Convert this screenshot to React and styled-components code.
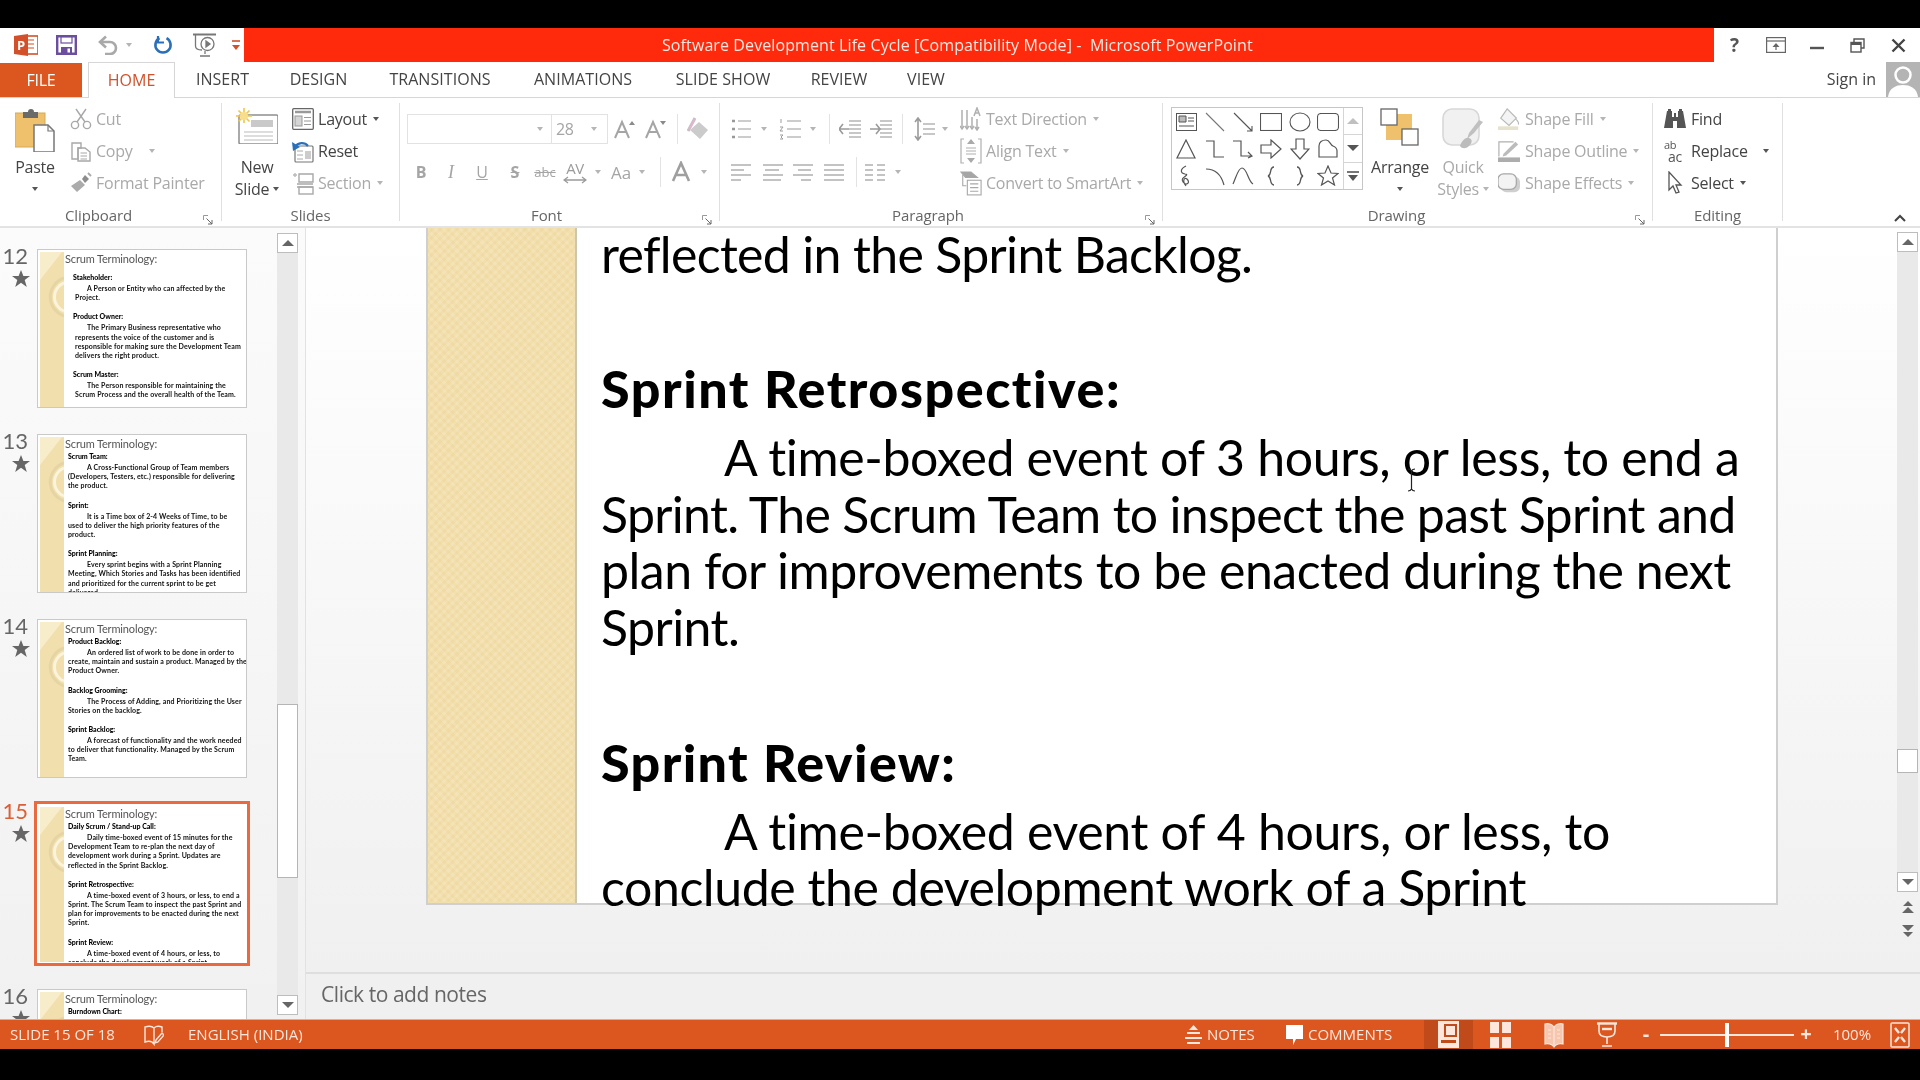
import React from 'react'
import styled, { createGlobalStyle } from 'styled-components'

const Global = createGlobalStyle`
  html, body { margin: 0; padding: 0; background: #000; }
  * { box-sizing: border-box; }
`

const UI = `"Open Sans", "Noto Sans", sans-serif`
const SLIDE = `Lato, "Open Sans", sans-serif`

const Page = styled.div`
  width: 1920px;
  height: 1080px;
  display: flex;
  flex-direction: column;
  overflow: hidden;
  background: #000;
  font-family: ${UI};
  filter: blur(0.45px);
`
const BlackBar = styled.div`
  flex: ${(p) => (p.$fill ? 1 : 'none')};
  height: ${(p) => (p.$fill ? 'auto' : `${p.$h}px`)};
  background: #000;
`

/* title bar */
const TitleRow = styled.div`
  display: flex;
  height: 34px;
  background: #fff;
`
const Qat = styled.div`
  width: 244px;
  display: flex;
  align-items: center;
  padding-left: 14px;
`
const QatSlot = styled.div`
  width: ${(p) => p.$w}px;
  display: flex;
  align-items: center;
`
const TitleBar = styled.div`
  width: 1470px;
  background: #ff2a0b;
  color: #ffe9e2;
  font-size: 16px;
  line-height: 35px;
  padding-left: 418px;
  white-space: pre;
  letter-spacing: 0.1px;
`
const WinControls = styled.div`
  flex: 1;
  display: flex;
  align-items: center;
`
const WinSlot = styled.div`
  width: 41px;
  display: flex;
  justify-content: center;
  align-items: center;
  font-size: 19px;
  font-weight: 700;
  color: #555;
`

/* tabs */
const TabRow = styled.div`
  display: flex;
  height: 36px;
  background: #fff;
  border-bottom: 1px solid #d6d6d6;
`
const FileTab = styled.div`
  width: 82px;
  margin-right: 6px;
  margin-top: 1px;
  background: #dc5620;
  color: #fff;
  font-size: 16px;
  text-align: center;
  line-height: 34px;
  letter-spacing: -0.3px;
`
const Tab = styled.div`
  width: ${(p) => p.$w}px;
  height: ${(p) => (p.$active ? 36 : 35)}px;
  text-align: center;
  font-size: 16px;
  line-height: 35px;
  letter-spacing: 0.05px;
  color: ${(p) => (p.$active ? '#d2502a' : '#444')};
  background: #fff;
  border: ${(p) => (p.$active ? '1px solid #d6d6d6' : 'none')};
  border-bottom: none;
`
const SignIn = styled.div`
  margin-left: auto;
  display: flex;
  align-items: center;
  font-size: 16px;
  line-height: 33px;
  color: #444;
  gap: 10px;
`
const Avatar = styled.div`
  width: 34px;
  height: 35px;
  background: #b4b4b4;
  overflow: hidden;
`

/* ribbon */
const Ribbon = styled.div`
  display: flex;
  height: 130px;
  background: #fff;
  border-bottom: 2px solid #e3e3e3;
  padding-top: 5px;
`
const Group = styled.div`
  position: relative;
  width: ${(p) => p.$w}px;
  height: 118px;
  flex: none;
  border-right: 1px solid #e0e0e0;
`
const GroupBody = styled.div`
  height: 102px;
  display: flex;
  padding-left: ${(p) => p.$pad || 0}px;
`
const GroupLabel = styled.div`
  height: 20px;
  line-height: 20px;
  text-align: center;
  font-size: 15px;
  letter-spacing: -0.1px;
  color: #666;
  padding-right: ${(p) => p.$shift || 0}px;
`
const Launcher = styled.div`
  position: absolute;
  right: ${(p) => p.$right || 6}px;
  bottom: -4px;
  width: 10px;
  height: 10px;
  display: flex;
`
const Large = styled.div`
  width: ${(p) => p.$w}px;
  margin-left: ${(p) => p.$ml || 0}px;
  display: flex;
  flex-direction: column;
  align-items: center;
  padding-top: 5px;
  flex: none;
  color: ${(p) => (p.$off ? '#a9a9a9' : '#444')};
  font-size: 16px;
  letter-spacing: -0.25px;
`
const LargeIcon = styled.div`
  height: 44px;
  margin-bottom: 4px;
  display: flex;
`
const LargeLine = styled.div`
  height: 22px;
  line-height: 22px;
  display: flex;
  align-items: center;
  gap: 4px;
  white-space: nowrap;
`
const SmallCol = styled.div`
  display: flex;
  flex-direction: column;
  margin-left: ${(p) => p.$ml || 0}px;
`
const SmallRow = styled.div`
  height: 32px;
  display: flex;
  align-items: center;
  font-size: 16px;
  letter-spacing: -0.22px;
  white-space: nowrap;
  color: ${(p) => (p.$off ? '#a9a9a9' : '#444')};
`
const SmallIcon = styled.div`
  width: 22px;
  margin-right: ${(p) => p.$gap ?? 4}px;
  display: flex;
  justify-content: center;
  flex: none;
`
const Caret = styled.span`
  display: inline-block;
  width: 0;
  height: 0;
  flex: none;
  margin-left: ${(p) => p.$ml || 0}px;
  border-left: 3px solid transparent;
  border-right: 3px solid transparent;
  border-top: 4px solid ${(p) => (p.$off ? '#b5b5b5' : '#555')};
`
const ToolRow = styled.div`
  display: flex;
  align-items: center;
  height: 30px;
  margin-top: ${(p) => p.$mt}px;
`
const ToolCol = styled.div`
  width: ${(p) => p.$w}px;
  flex: none;
`
const Slot = styled.div`
  width: ${(p) => p.$w}px;
  flex: none;
  display: flex;
  justify-content: center;
  align-items: center;
  color: #a5a5a5;
  font-size: ${(p) => p.$size || 17}px;
  font-weight: ${(p) => p.$weight || 400};
  font-style: ${(p) => (p.$italic ? 'italic' : 'normal')};
  text-decoration: ${(p) => p.$deco || 'none'};
  font-family: ${(p) => (p.$serif ? '"Liberation Serif", serif' : UI)};
`
const AvGlyph = styled.div`
  display: flex;
  flex-direction: column;
  align-items: center;
  font-size: 15px;
  line-height: 15px;
  color: #9b9b9b;
  letter-spacing: -0.5px;
`
const ReplaceGlyph = styled.div`
  display: flex;
  flex-direction: column;
  align-items: flex-start;
  width: 24px;
  color: #555;
  letter-spacing: -0.3px;
`
const ReplaceTop = styled.div`
  height: 11px;
  font-size: 11px;
  line-height: 11px;
`
const ReplaceBottom = styled.div`
  height: 13px;
  padding-left: 4px;
  font-size: 14px;
  line-height: 13px;
`
const VSep = styled.div`
  width: 1px;
  height: 30px;
  flex: none;
  background: #e3e3e3;
`
const FontBox = styled.div`
  width: ${(p) => p.$w}px;
  height: 30px;
  flex: none;
  display: flex;
  align-items: center;
  border: 1px solid #e2e2e2;
  border-left-width: ${(p) => (p.$joined ? 0 : 1)}px;
  padding-left: ${(p) => p.$pad}px;
  font-size: 16px;
  color: #a5a5a5;
  letter-spacing: -0.3px;
  justify-content: ${(p) => (p.$end ? 'flex-end' : 'flex-start')};
  padding-right: ${(p) => (p.$end ? 8 : 0)}px;
`
const Gallery = styled.div`
  width: 192px;
  height: 83px;
  margin: 4px 0 0 8px;
  flex: none;
  display: flex;
  border: 1px solid #c6c6c6;
`
const ShapeGrid = styled.div`
  width: 171px;
  display: grid;
  grid-template-columns: repeat(6, 28.4px);
  grid-auto-rows: 27px;
  align-items: center;
  justify-items: center;
`
const GalleryScroll = styled.div`
  flex: 1;
  display: flex;
  flex-direction: column;
  border-left: 1px solid #d5d5d5;
`
const GalleryBtn = styled.div`
  flex: 1;
  display: flex;
  flex-direction: column;
  gap: 2px;
  align-items: center;
  justify-content: center;
  border-bottom: ${(p) => (p.$last ? 'none' : '1px solid #d5d5d5')};
`
const CollapseSlot = styled.div`
  margin-left: auto;
  align-self: flex-end;
  padding: 0 14px 4px 0;
  display: flex;
`

/* workspace */
const Workspace = styled.div`
  flex: none;
  height: 791px;
  display: flex;
`
const ThumbPane = styled.div`
  width: 306px;
  flex: none;
  display: flex;
  background: linear-gradient(#fbfbfb, #f1f1f1);
  border-right: 1px solid #e2e2e2;
`
const ThumbList = styled.div`
  width: 277px;
  flex: none;
  padding-top: 21px;
  display: flex;
  flex-direction: column;
  gap: 26px;
  overflow: hidden;
`
const ThumbItem = styled.div`
  display: flex;
  flex: none;
  height: 159px;
`
const ThumbNum = styled.div`
  width: 37px;
  flex: none;
  padding-right: 9px;
  margin-top: -4px;
  display: flex;
  flex-direction: column;
  align-items: flex-end;
  font-family: ${SLIDE};
  font-size: 22px;
  line-height: 22px;
  color: ${(p) => (p.$active ? '#dc5f35' : '#666')};
  svg { margin: 3px -2px 0 0; }
`
const Thumb = styled.div`
  width: 210px;
  height: 159px;
  flex: none;
  display: flex;
  background: #fff;
  overflow: hidden;
  border: 1px solid ${(p) => (p.$active ? '#fff' : '#c9c9c9')};
  outline: ${(p) => (p.$active ? '3px solid #e96a3e' : 'none')};
`
const ThumbStripe = styled.div`
  width: 24px;
  flex: none;
  margin: 2px 0 0 2px;
  background: #f2dfae;
  display: flex;
  align-items: flex-start;
`
const ThumbBody = styled.div`
  flex: 1;
  padding: 2px 0 0 1px;
  min-width: 0;
  font-family: ${SLIDE};
  filter: blur(0.5px);
`
const ThumbTitle = styled.div`
  font-size: 11px;
  line-height: 14px;
  color: #555;
  margin-bottom: ${(p) => p.$gap}px;
  letter-spacing: -0.15px;
`
const ThumbHead = styled.div`
  font-size: 7px;
  line-height: 9px;
  font-weight: 900;
  color: #000;
  margin-top: ${(p) => p.$mt}px;
  margin-bottom: 2px;
  margin-left: ${(p) => p.$ml}px;
  white-space: nowrap;
`
const ThumbLine = styled.div`
  font-size: 7px;
  line-height: 9.2px;
  font-weight: 700;
  color: #111;
  white-space: nowrap;
  letter-spacing: 0.02em;
  margin-left: ${(p) => p.$ml}px;
  padding-left: ${(p) => p.$indent}px;
`
const ScrollCol = styled.div`
  width: ${(p) => p.$w}px;
  flex: none;
  margin-top: ${(p) => p.$top}px;
  margin-bottom: ${(p) => p.$bottom}px;
  display: flex;
  flex-direction: column;
`
const ScrollBtn = styled.div`
  height: 20px;
  flex: none;
  display: flex;
  align-items: center;
  justify-content: center;
  background: #fff;
  border: 1px solid #bdbdbd;
`
const ScrollTrack = styled.div`
  flex: ${(p) => (p.$h ? 'none' : 1)};
  height: ${(p) => (p.$h ? `${p.$h}px` : 'auto')};
  background: #e9e9e9;
`
const ScrollThumb = styled.div`
  height: ${(p) => p.$h}px;
  margin-top: ${(p) => p.$top}px;
  background: #fff;
  border: 1px solid #b5b5b5;
`
const PageArrows = styled.div`
  display: flex;
  flex-direction: column;
  align-items: center;
  gap: 12px;
  padding-top: 9px;
`
const Editor = styled.div`
  flex: 1;
  display: flex;
  flex-direction: column;
  min-width: 0;
`
const EditArea = styled.div`
  height: 744px;
  flex: none;
  display: flex;
  background: linear-gradient(#fff, #f0f0f0);
`
const SlideWrap = styled.div`
  width: 1591px;
  flex: none;
  padding-left: 120px;
`
const SlideCard = styled.div`
  position: relative;
  width: 1352px;
  height: 677px;
  display: flex;
  background: #fff;
  border-right: 2px solid #cfcfcf;
  border-bottom: 2px solid #cfcfcf;
  border-left: 2px solid #cfcfcf;
`
const SlideStripe = styled.div`
  width: 149px;
  flex: none;
  border-right: 2px solid #cdc6ae;
  background-color: #f3dfac;
  background-image:
    repeating-linear-gradient(45deg, rgba(255, 255, 255, 0.12) 0 3px, transparent 3px 6px),
    repeating-linear-gradient(-45deg, rgba(214, 180, 110, 0.12) 0 3px, transparent 3px 6px);
`
const SlideText = styled.div`
  padding-left: 24px;
  margin-top: -2px;
  font-family: ${SLIDE};
  color: #000;
  font-size: 50px;
`
const SlideHead = styled.div`
  font-weight: 900;
  font-size: 52px;
  letter-spacing: ${(p) => p.$ls}px;
  line-height: 56.5px;
  white-space: nowrap;
  margin-top: ${(p) => p.$mt}px;
  margin-bottom: 12.5px;
`
const SlideLine = styled.div`
  line-height: 56.5px;
  white-space: nowrap;
  letter-spacing: ${(p) => p.$ls}px;
  padding-left: ${(p) => (p.$indent ? 123 : 0)}px;
`
const IBeam = styled.div`
  position: absolute;
  left: 979px;
  top: 240px;
  display: flex;
`
const NotesBar = styled.div`
  flex: 1;
  background: #f0f0f0;
  border-top: 2px solid #dedede;
  padding-left: 15px;
  font-size: 21px;
  line-height: 40px;
  letter-spacing: -0.45px;
  color: #666;
`

/* status bar */
const StatusBar = styled.div`
  flex: none;
  height: 30px;
  display: flex;
  align-items: center;
  background: #dc5620;
  border-top: 1px solid #f2a888;
  color: #fde7dc;
  font-size: 15px;
  padding-left: 10px;
  padding-right: 8px;
`
const StatusCell = styled.div`
  width: ${(p) => p.$w}px;
  height: 29px;
  flex: none;
  display: flex;
  align-items: center;
  padding-bottom: ${(p) => (p.$text ? 2 : 0)}px;
  justify-content: ${(p) => (p.$center ? 'center' : 'flex-start')};
  white-space: nowrap;
  margin-left: ${(p) => (p.$push ? 'auto' : 0)};
  background: ${(p) => (p.$active ? '#c14a1b' : 'transparent')};
  font-size: ${(p) => p.$size || 15}px;
  font-weight: ${(p) => p.$weight || 400};
`
const Slider = styled.div`
  position: relative;
  width: 134px;
  height: 2px;
  flex: none;
  margin: 0 2px;
  background: #fde7dc;
`
const SliderKnob = styled.div`
  position: absolute;
  left: 65px;
  top: -11px;
  width: 4px;
  height: 24px;
  background: #fff;
`

/* drawings */
const Ic = ({ w = 22, h = 22, children, fill = 'none', stroke = '#a8a8a8', sw = 1.4 }) => (
  <svg width={w} height={h} viewBox={`0 0 ${w} ${h}`} fill={fill} stroke={stroke} strokeWidth={sw}>
    {children}
  </svg>
)

const PptLogo = () => (
  <svg width="24" height="22" viewBox="0 0 24 22">
    <rect x="9" y="2" width="15" height="18" fill="#fff" stroke="#d2502a" strokeWidth="1.6" />
    <path d="M13 6h7M13 10h7M13 14h7" stroke="#e08a6a" strokeWidth="1.6" />
    <path d="M0 2 L14 0 V22 L0 20Z" fill="#d2502a" />
    <text x="3" y="16" fontSize="13" fontWeight="700" fill="#fff" fontFamily="Open Sans">P</text>
  </svg>
)
const SaveIcon = () => (
  <svg width="21" height="20" viewBox="0 0 21 20">
    <path d="M1.2 1.2H19.8V18.8H1.2Z" fill="#fff" stroke="#6b4f9e" strokeWidth="2.4" />
    <rect x="5" y="2" width="11" height="6" fill="#fff" stroke="#6b4f9e" strokeWidth="1.2" />
    <rect x="5" y="12" width="11" height="7" fill="#6b4f9e" />
    <rect x="11.5" y="13.5" width="2.5" height="4" fill="#fff" />
  </svg>
)
const UndoIcon = () => (
  <svg width="22" height="20" viewBox="0 0 22 20" fill="none" stroke="#a9a9a9" strokeWidth="2.6">
    <path d="M3 7H13A6 6 0 0 1 13 19H8" />
    <path d="M9 1.5L3 7L9 12.5" />
  </svg>
)
const RedoIcon = () => (
  <svg width="20" height="20" viewBox="0 0 20 20" fill="none" stroke="#2a70b8" strokeWidth="2.6">
    <path d="M13.5 3.2A7.6 7.6 0 1 1 6.5 3.2" />
    <path d="M5 1V7.5H11" strokeWidth="2.2" />
  </svg>
)
const PresentIcon = () => (
  <svg width="23" height="24" viewBox="0 0 23 24" fill="none" stroke="#777" strokeWidth="1.3">
    <path d="M0 1.5H23" strokeWidth="2" />
    <path d="M2.5 2V13C2.5 16 6 17 9 17" />
    <circle cx="14.5" cy="11" r="6.5" />
    <path d="M13 8L17 11L13 14Z" fill="#777" />
    <path d="M12 18V21M7 23H17" />
  </svg>
)
const QatMore = () => (
  <svg width="8" height="11" viewBox="0 0 8 11">
    <path d="M0 1H8" stroke="#d2502a" strokeWidth="1.6" />
    <path d="M0 5H8L4 10Z" fill="#d2502a" />
  </svg>
)
const RibbonDisplay = () => (
  <svg width="20" height="16" viewBox="0 0 20 16" fill="none" stroke="#666" strokeWidth="1.2">
    <rect x="0.6" y="0.6" width="18.8" height="14.8" />
    <path d="M1 4H19" />
    <path d="M10 6L6.5 10H13.5Z" fill="#666" stroke="none" />
    <path d="M10 9V13" />
  </svg>
)
const MinIcon = () => (
  <Ic w={14} h={14} stroke="#555" sw={2.4}>
    <path d="M0 10H14" />
  </Ic>
)
const RestoreIcon = () => (
  <Ic w={15} h={15} stroke="#555" sw={1.4}>
    <path d="M4 4V1H14V10H11" />
    <rect x="1" y="4.5" width="10" height="9.5" />
    <path d="M1 6H11" strokeWidth="2" />
  </Ic>
)
const CloseIcon = () => (
  <Ic w={15} h={15} stroke="#444" sw={2.4}>
    <path d="M1.5 1.5L13.5 13.5M13.5 1.5L1.5 13.5" />
  </Ic>
)
const PersonIcon = () => (
  <svg width="34" height="35" viewBox="0 0 34 35">
    <circle cx="17" cy="13" r="7.5" fill="none" stroke="#fff" strokeWidth="2.5" />
    <path d="M2 35C3 26 10 23 17 23S31 26 32 35Z" fill="#fff" />
  </svg>
)
const PasteIcon = () => (
  <svg width="40" height="44" viewBox="0 0 40 44">
    <rect x="0" y="5" width="30" height="34" fill="#efc16d" stroke="#d5a957" />
    <path d="M8 2H13A3 3 0 0 1 19 2H23V8H8Z" fill="#6a6a6a" transform="translate(0 2)" />
    <path d="M19 17H33L39 23V44H19Z" fill="#fff" stroke="#777" strokeWidth="1.5" />
    <path d="M33 17V23H39" fill="none" stroke="#777" strokeWidth="1.2" />
  </svg>
)
const CutIcon = () => (
  <Ic h={22}>
    <path d="M6 1L15 14M16 1L7 14" />
    <circle cx="5" cy="17" r="3.6" />
    <circle cx="17" cy="17" r="3.6" />
  </Ic>
)
const CopyIcon = () => (
  <Ic>
    <path d="M2 3H11V8H8V19H2Z" />
    <path d="M8 8H15L20 12V21H8Z" />
    <path d="M10.5 13H17M10.5 16H17M10.5 19H17" strokeWidth="1" />
  </Ic>
)
const BrushIcon = () => (
  <svg width="22" height="22" viewBox="0 0 22 22" fill="#ababab">
    <path d="M1 14L10 8L15 13L7 20Z" />
    <path d="M12 7L15 3L19 7L15 11Z" fill="#8d8d8d" />
    <path d="M18 1L21 4" stroke="#aaa" strokeWidth="2" />
  </svg>
)
const NewSlideIcon = () => (
  <svg width="42" height="36" viewBox="0 0 42 36">
    <rect x="3" y="7" width="39" height="29" rx="1.5" fill="#fff" stroke="#8e8e8e" strokeWidth="1.5" />
    <rect x="15" y="12" width="22" height="7" fill="#c9c9c9" />
    <path d="M8 24H37M8 28H37M8 32H37" stroke="#bbb" strokeWidth="1.2" />
    <path d="M8 0V15M0 8H16M2.5 2.5L13.5 13.5M13.5 2.5L2.5 13.5" stroke="#f2c44c" strokeWidth="1.6" />
    <circle cx="8" cy="8" r="4" fill="#f8de8b" />
  </svg>
)
const LayoutIcon = () => (
  <svg width="22" height="22" viewBox="0 0 22 22" fill="none" stroke="#666" strokeWidth="1.3">
    <rect x="0.7" y="0.7" width="20.6" height="20.6" rx="1" fill="#fff" />
    <path d="M3 4H19" stroke="#999" strokeWidth="2.5" />
    <rect x="3" y="8" width="7" height="10" fill="#d5d5d5" stroke="#999" strokeWidth="1" />
    <path d="M12 9.5H19M12 13H19M12 16.5H19" stroke="#999" strokeWidth="1" />
  </svg>
)
const ResetIcon = () => (
  <svg width="22" height="24" viewBox="0 0 22 24" fill="none">
    <rect x="3" y="7" width="18" height="16" rx="1" fill="#fff" stroke="#777" strokeWidth="1.2" />
    <path d="M5 12H11M5 16H11M5 20H11" stroke="#aaa" />
    <rect x="13" y="12" width="6" height="8" fill="#ccc" />
    <path d="M3 8A8 8 0 0 1 16 7" stroke="#2a70b8" strokeWidth="2.2" />
    <path d="M0 3L1 12L8 8Z" fill="#2a70b8" />
  </svg>
)
const SectionIcon = () => (
  <Ic h={24}>
    <path d="M1 4H5M3 2V6" stroke="#bbb" />
    <path d="M7 3H21V11H7Z" />
    <path d="M5 13H21M5 16H21" />
    <rect x="7" y="16" width="14" height="7" />
  </Ic>
)
const FontGrow = ({ down }) => (
  <svg width="22" height="22" viewBox="0 0 22 22" fill="none" stroke="#a5a5a5">
    <path d="M1 20L8 4L15 20M4 14H12" strokeWidth="2" />
    <path d={down ? 'M15 3H21L18 7Z' : 'M15 7H21L18 3Z'} fill="#8a8a8a" stroke="none" />
  </svg>
)
const EraserIcon = () => (
  <svg width="22" height="24" viewBox="0 0 22 24" fill="none">
    <path d="M8 1L1 14" stroke="#c1c1c1" strokeWidth="3" />
    <path d="M3 13L12 5L21 13L13 22Z" fill="#cbcbcb" />
    <path d="M8 2L2 12" stroke="#e3b3cf" strokeWidth="2" />
  </svg>
)
const AvArrow = () => (
  <svg width="24" height="8" viewBox="0 0 24 8" fill="none" stroke="#9b9b9b" strokeWidth="1.3">
    <path d="M1 4H23M5 1L1 4L5 7M19 1L23 4L19 7" />
  </svg>
)
const ColorA = () => (
  <svg width="20" height="22" viewBox="0 0 20 22" fill="none" stroke="#9f9f9f" strokeWidth="2.6">
    <path d="M2 20L10 2L18 20M5 14H15" />
  </svg>
)
const BulletsIcon = () => (
  <Ic w={20} h={22} stroke="#bcbcbc" sw={1.3}>
    <path d="M7 3H20M7 11H20M7 19H20" />
    <path d="M1 3H4M1 11H4M1 19H4" stroke="#999" strokeWidth="2.4" />
  </Ic>
)
const NumberingIcon = () => (
  <Ic w={22} h={22} stroke="#bcbcbc" sw={1.3}>
    <path d="M8 3H22M8 11H22M8 19H22" />
    <path d="M2 1V5M1 9H4L1 13H4M1 17H4L2 19L4 21H1" stroke="#9d9d9d" strokeWidth="1" />
  </Ic>
)
const IndentIcon = ({ dir }) => (
  <Ic w={22} h={20} stroke="#b5b5b5" sw={1.3}>
    <path d="M10 2H22M10 6H22M10 10H22M10 14H22M10 18H22" />
    <path
      d={dir === 'in' ? 'M0 10H10M6 5L10 10L6 15' : 'M10 10H0M4 5L0 10L4 15'}
      stroke="#9a9a9a"
      strokeWidth="1.6"
    />
  </Ic>
)
const LineSpacing = () => (
  <Ic w={21} h={24} stroke="#b5b5b5" sw={1.3}>
    <path d="M9 7H21M9 12H21M9 17H21" />
    <path d="M4 1V23M1 5L4 1L7 5M1 19L4 23L7 19" stroke="#9a9a9a" strokeWidth="1.6" />
  </Ic>
)
const TextDir = () => (
  <svg width="22" height="24" viewBox="0 0 22 24" fill="none" stroke="#b0b0b0" strokeWidth="1.5">
    <path d="M2 3V20M7 3V20M12 10V20" />
    <path d="M0 19L2 22L4 19M5 19L7 22L9 19M10 19L12 22L14 19" />
    <path d="M14 9L17 1L20 9M15 6H19" />
    <path d="M17 12V22M15 20L17 23L19 20" />
  </svg>
)
const AlignTextIcon = () => (
  <svg width="22" height="26" viewBox="0 0 22 26" fill="none" stroke="#b0b0b0" strokeWidth="1.2">
    <path d="M4 1H1V25H4M18 1H21V25H18" />
    <path d="M7 6H15L11 1ZM7 20H15L11 25Z" fill="#aaa" stroke="none" />
    <path d="M6 10H16M6 13H16M6 16H16" />
  </svg>
)
const SmartArtIcon = () => (
  <svg width="24" height="28" viewBox="0 0 24 28" fill="none" stroke="#a8a8a8" strokeWidth="1.2">
    <path d="M1 2H12L19 8H6Z" fill="#a5a5a5" />
    <path d="M3 5V17H7" />
    <rect x="8" y="11" width="15" height="16" fill="#fff" />
    <path d="M11 15H20M11 19H20M11 23H20" />
  </svg>
)
const ArrangeIcon = () => (
  <svg width="40" height="38" viewBox="0 0 40 38">
    <rect x="6" y="6" width="26" height="26" fill="#efc16d" />
    <rect x="1" y="1" width="16" height="16" fill="#fff" stroke="#666" strokeWidth="1.3" />
    <rect x="22" y="21" width="16" height="16" fill="#fff" stroke="#666" strokeWidth="1.3" />
  </svg>
)
const QuickStylesIcon = () => (
  <svg width="42" height="44" viewBox="0 0 42 44">
    <rect x="1" y="1" width="36" height="36" rx="9" fill="#f1f1f1" stroke="#d7d7d7" strokeWidth="1.6" />
    <path d="M41 14L32 25L25 31L27 25L37 12Z" fill="#c0c0c0" />
    <path d="M18 38C20 32 24 29 27 30S31 34 27 38C24 41 20 41 18 38Z" fill="#bcbcbc" />
  </svg>
)
const ShapeFillIcon = () => (
  <svg width="24" height="24" viewBox="0 0 24 24" fill="none" stroke="#b9b9b9" strokeWidth="1.3">
    <path d="M10 1L20 11L12 19L3 11Z" fill="#f4f4f4" />
    <path d="M19 12C22 14 23 17 22 18" />
    <rect x="0" y="20" width="22" height="4" fill="#e7e2cc" stroke="none" />
  </svg>
)
const ShapeOutlineIcon = () => (
  <svg width="24" height="24" viewBox="0 0 24 24" fill="none" stroke="#b0b0b0" strokeWidth="1.3">
    <path d="M1 18V2H17" />
    <path d="M6 15L19 2L22 5L9 17L5 18Z" fill="#bbb" stroke="none" />
    <rect x="0" y="19" width="24" height="5" fill="#adadad" stroke="none" />
  </svg>
)
const ShapeEffectsIcon = () => (
  <svg width="24" height="22" viewBox="0 0 24 22">
    <rect x="3" y="4" width="21" height="17" rx="6" fill="#cfcfcf" />
    <rect x="0" y="1" width="20" height="17" rx="6" fill="#f3f3f3" stroke="#a7a7a7" strokeWidth="1.4" />
  </svg>
)
const FindIcon = () => (
  <svg width="22" height="22" viewBox="0 0 22 22" fill="#555">
    <path d="M3 3H8V9H10V5H12V9H14V3H19L22 20H13V13H9V20H0Z" />
    <rect x="4" y="1" width="3" height="3" />
    <rect x="15" y="1" width="3" height="3" />
  </svg>
)
const SelectIcon = () => (
  <svg width="16" height="24" viewBox="0 0 16 24" fill="#fff" stroke="#555" strokeWidth="1.3">
    <path d="M2 1V19L6 15L9 22L12 21L9 14H14Z" />
  </svg>
)
const Launch = () => (
  <svg width="10" height="10" viewBox="0 0 10 10" fill="none" stroke="#999">
    <path d="M0.5 5V0.5H5" />
    <path d="M3.5 3.5L9 9M9 5V9H5" stroke="#666" />
  </svg>
)
const CollapseIcon = () => (
  <svg width="12" height="8" viewBox="0 0 12 8" fill="none" stroke="#444" strokeWidth="2">
    <path d="M1 7L6 2L11 7" />
  </svg>
)
const AlignIcon = ({ kind }) => {
  const x = { left: [0, 13, 0, 10], center: [2, 16, 0, 18], right: [5, 18, 8, 18], justify: [0, 20, 0, 20] }[kind]
  return (
    <Ic w={20} h={18} stroke="#b0b0b0" sw={1.4}>
      <path d={`M0 2H20M${x[0]} 7H${x[1]}M0 12H20M${x[2]} 17H${x[3]}`} />
    </Ic>
  )
}
const ColumnsIcon = () => (
  <Ic w={20} h={18} stroke="#b0b0b0" sw={1.4}>
    <path d="M0 2H8M12 2H20M0 7H8M12 7H20M0 12H8M12 12H20M0 17H8M12 17H20" />
  </Ic>
)

const shapes = [
  <svg key="a" width="21" height="18" viewBox="0 0 21 18" fill="none" stroke="#555"><rect x="0.5" y="0.5" width="20" height="17" /><path d="M3 3H10V9H3Z" fill="#bbb" /><path d="M12 5H18M12 8H18M3 13H18" /></svg>,
  <Ic key="b" w={20} h={20} stroke="#777" sw={1.1}><path d="M1 1L19 19" /></Ic>,
  <Ic key="c" w={20} h={20} stroke="#555" sw={1.1}><path d="M1 1L19 19M14 19H19V14" /></Ic>,
  <Ic key="d" w={22} h={18} stroke="#555" sw={1.1}><rect x="0.5" y="0.5" width="21" height="17" /></Ic>,
  <Ic key="e" w={22} h={20} stroke="#555" sw={1.1}><ellipse cx="11" cy="10" rx="10" ry="9" /></Ic>,
  <Ic key="f" w={22} h={18} stroke="#555" sw={1.1}><rect x="0.5" y="0.5" width="21" height="17" rx="3.5" /></Ic>,
  <Ic key="g" w={20} h={20} stroke="#555" sw={1.2}><path d="M10 1L19 19H1Z" /></Ic>,
  <Ic key="h" w={20} h={20} stroke="#555" sw={1.2}><path d="M1 2H9V18H19" /></Ic>,
  <Ic key="i" w={22} h={20} stroke="#555" sw={1.2}><path d="M1 2H9V17H20M16 13L20 17L16 19" /></Ic>,
  <Ic key="j" w={22} h={20} stroke="#555" sw={1.2}><path d="M1 6H11V1L21 10L11 19V14H1Z" /></Ic>,
  <Ic key="k" w={20} h={22} stroke="#555" sw={1.2}><path d="M6 1H14V11H19L10 21L1 11H6Z" /></Ic>,
  <Ic key="l" w={20} h={20} stroke="#555" sw={1.2}><path d="M1 18V7C1 3 4 1 8 1C12 1 12 6 15 7C18 8 19 9 19 12V18Z" /></Ic>,
  <Ic key="m" w={18} h={22} stroke="#555" sw={1.2}><path d="M9 1C3 4 3 8 8 9C14 10 2 12 6 17C9 21 14 18 10 14C7 12 5 16 9 21" /></Ic>,
  <Ic key="n" w={20} h={20} stroke="#555" sw={1.2}><path d="M1 3C10 3 16 8 19 19" /></Ic>,
  <Ic key="o" w={22} h={20} stroke="#555" sw={1.2}><path d="M1 18C4 12 6 2 10 2C15 2 16 15 21 18" /></Ic>,
  <Ic key="p" w={10} h={20} stroke="#555" sw={1.3}><path d="M8 1C3 1 6 9 2 10C6 11 3 19 8 19" /></Ic>,
  <Ic key="q" w={10} h={20} stroke="#555" sw={1.3}><path d="M2 1C7 1 4 9 8 10C4 11 7 19 2 19" /></Ic>,
  <Ic key="r" w={22} h={21} stroke="#555" sw={1.2}><path d="M11 1L14 8L21 8.5L15.5 13L17.5 20L11 16L4.5 20L6.5 13L1 8.5L8 8Z" /></Ic>,
]

const Tri = ({ up, c = '#666' }) => (
  <svg width="12" height="6" viewBox="0 0 12 6">
    <path d={up ? 'M0 6L6 0L12 6Z' : 'M0 0H12L6 6Z'} fill={c} />
  </svg>
)
const Star = () => (
  <svg width="18" height="17" viewBox="0 0 18 17">
    <path d="M9 0L11.4 6H18L12.7 10L14.8 17L9 12.8L3.2 17L5.3 10L0 6H6.6Z" fill="#666" />
  </svg>
)
const StripeArt = () => (
  <svg width="24" height="100" viewBox="0 0 24 100" fill="none">
    <path d="M0 28L22 0H0Z" fill="#f8edcb" />
    <path d="M24 26A20 20 0 0 0 24 64" stroke="#e6d5a4" strokeWidth="3" />
    <path d="M24 31A15 15 0 0 0 24 59" stroke="#fbf4dd" strokeWidth="3" />
  </svg>
)
const BookIcon = () => (
  <svg width="20" height="22" viewBox="0 0 20 22" fill="none" stroke="#fde7dc" strokeWidth="1.4">
    <path d="M10 4C8 2 4 2 1 3V18C4 17 8 17 10 20V4C12 2 15 2 18 3V8" />
    <path d="M12 16L18 9L20 11L14 18L11 19Z" />
  </svg>
)
const NotesIcon = () => (
  <svg width="17" height="20" viewBox="0 0 17 20" fill="#fde7dc">
    <path d="M8.5 0L13 5H4Z" />
    <rect x="2" y="7" width="13" height="2" />
    <rect x="0" y="12" width="17" height="2" />
    <rect x="2" y="17" width="13" height="2" />
  </svg>
)
const CommentIcon = () => (
  <svg width="17" height="20" viewBox="0 0 17 20" fill="#fff">
    <path d="M0 0H17V14H10L7 20V14H0Z" />
  </svg>
)
const NormalViewIcon = () => (
  <svg width="21" height="27" viewBox="0 0 21 27">
    <rect x="0" y="0" width="21" height="27" fill="#fde7dc" />
    <rect x="7" y="4" width="11" height="11" fill="none" stroke="#c14a1b" strokeWidth="2" />
    <rect x="3" y="19" width="15" height="3" fill="#c14a1b" />
  </svg>
)
const SorterIcon = () => (
  <svg width="21" height="26" viewBox="0 0 21 26" fill="#fde7dc">
    <rect x="0" y="0" width="9" height="11" />
    <rect x="12" y="0" width="9" height="11" />
    <rect x="0" y="15" width="9" height="11" />
    <rect x="12" y="15" width="9" height="11" />
  </svg>
)
const ReadingIcon = () => (
  <svg width="20" height="26" viewBox="0 0 20 26" fill="#f7c6ae" stroke="#fde7dc" strokeWidth="1.2">
    <path d="M10 5C8 2 4 1 1 2V22C4 21 8 22 10 25C12 22 16 21 19 22V2C16 1 12 2 10 5Z" />
    <path d="M10 5V25M4 8H7M4 12H7M4 16H7M13 8H16M13 12H16M13 16H16" />
  </svg>
)
const ShowIcon = () => (
  <svg width="20" height="25" viewBox="0 0 20 25" fill="none" stroke="#fde7dc" strokeWidth="1.6">
    <path d="M0 1.5H20" strokeWidth="2.4" />
    <path d="M2 2V9C2 13 5 15 10 15C15 15 18 13 18 9V2" />
    <path d="M5 7H15" strokeWidth="2.4" />
    <path d="M10 15V22M5 24H15" />
  </svg>
)
const FitIcon = () => (
  <svg width="20" height="26" viewBox="0 0 20 26" fill="none" stroke="#fde7dc" strokeWidth="1.5">
    <rect x="1" y="1" width="18" height="24" rx="1" />
    <path d="M5 6L9 11M15 6L11 11M5 20L9 15M15 20L11 15" strokeWidth="2.4" />
  </svg>
)
const CursorIcon = () => (
  <svg width="9" height="24" viewBox="0 0 9 24" fill="none" stroke="#222" strokeWidth="1.2">
    <path d="M1 1C3 1 4 2 4.5 3C5 2 6 1 8 1M4.5 3V21M1 23C3 23 4 22 4.5 21C5 22 6 23 8 23" />
  </svg>
)
const DoubleArrow = ({ up }) => (
  <svg width="14" height="12" viewBox="0 0 14 12" fill="#666">
    {up ? <path d="M7 0L12 5H2ZM7 6L13 12H1Z" /> : <path d="M1 0H13L7 6ZM2 7H12L7 12Z" />}
  </svg>
)

const thumbs = [
  {
    n: 12,
    gap: 7,
    head: 8,
    ml: 10,
    indent: 12,
    blocks: [
      ['Stakeholder:', 'A Person or Entity who can affected by the', 'Project.'],
      ['Product Owner:', 'The Primary Business representative who', 'represents the voice of the customer and is', 'responsible for making sure the Development Team', 'delivers the right product.'],
      ['Scrum Master:', 'The Person responsible for maintaining the', 'Scrum Process and the overall health of the Team.'],
    ],
  },
  {
    n: 13,
    gap: 1,
    head: 3,
    ml: 3,
    indent: 19,
    blocks: [
      ['Scrum Team:', 'A Cross-Functional Group of Team members', '(Developers, Testers, etc.) responsible for delivering', 'the product.'],
      ['Sprint:', 'It is a Time box of 2-4 Weeks of Time, to be', 'used to deliver the high priority features of the', 'product.'],
      ['Sprint Planning:', 'Every sprint begins with a Sprint Planning', 'Meeting, Which Stories and Tasks has been identified', 'and prioritized for the current sprint to be get', 'delivered.'],
    ],
  },
  {
    n: 14,
    gap: 1,
    head: 3,
    ml: 3,
    indent: 19,
    blocks: [
      ['Product Backlog:', 'An ordered list of work to be done in order to', 'create, maintain and sustain a product. Managed by the', 'Product Owner.'],
      ['Backlog Grooming:', 'The Process of Adding, and Prioritizing the User', 'Stories on the backlog.'],
      ['Sprint Backlog:', 'A forecast of functionality and the work needed', 'to deliver that functionality. Managed by the Scrum', 'Team.'],
    ],
  },
  {
    n: 15,
    gap: 1,
    head: 3,
    ml: 3,
    indent: 19,
    active: true,
    blocks: [
      ['Daily Scrum / Stand-up Call:', 'Daily time-boxed event of 15 minutes for the', 'Development Team to re-plan the next day of', 'development work during a Sprint. Updates are', 'reflected in the Sprint Backlog.'],
      ['Sprint Retrospective:', 'A time-boxed event of 3 hours, or less, to end a', 'Sprint. The Scrum Team to inspect the past Sprint and', 'plan for improvements to be enacted during the next', 'Sprint.'],
      ['Sprint Review:', 'A time-boxed event of 4 hours, or less, to', 'conclude the development work of a Sprint'],
    ],
  },
  { n: 16, gap: 1, head: 3, ml: 3, indent: 19, blocks: [['Burndown Chart:']] },
]

const tabs = [
  ['HOME', 87, true],
  ['INSERT', 95],
  ['DESIGN', 97],
  ['TRANSITIONS', 146],
  ['ANIMATIONS', 140],
  ['SLIDE SHOW', 140],
  ['REVIEW', 92],
  ['VIEW', 82],
]

// letter spacing per line, the Lato line widths differ a little from the slide's font
const slideBody = [
  [
    ['A time-boxed event of 3 hours, or less, to end a', -0.36],
    ['Sprint. The Scrum Team to inspect the past Sprint and', -0.69],
    ['plan for improvements to be enacted during the next', -0.48],
    ['Sprint.', -0.55],
  ],
  [
    ['A time-boxed event of 4 hours, or less, to', -0.33],
    ['conclude the development work of a Sprint', -0.43],
  ],
]

const ThumbCard = ({ t }) => (
  <ThumbItem>
    <ThumbNum $active={t.active}>
      {t.n}
      <Star />
    </ThumbNum>
    <Thumb $active={t.active}>
      <ThumbStripe>
        <StripeArt />
      </ThumbStripe>
      <ThumbBody>
        <ThumbTitle $gap={t.gap}>Scrum Terminology:</ThumbTitle>
        {t.blocks.map((b, i) => (
          <React.Fragment key={b[0]}>
            <ThumbHead $mt={i === 0 ? 0 : 10} $ml={t.head}>
              {b[0]}
            </ThumbHead>
            {b.slice(1).map((line, j) => (
              <ThumbLine key={line} $ml={t.ml} $indent={j === 0 ? t.indent : 0}>
                {line}
              </ThumbLine>
            ))}
          </React.Fragment>
        ))}
      </ThumbBody>
    </Thumb>
  </ThumbItem>
)

const App = () => {
  return (
    <Page>
      <Global />
      <BlackBar $h={28} />
      <TitleRow>
        <Qat>
          <QatSlot $w={42}><PptLogo /></QatSlot>
          <QatSlot $w={41}><SaveIcon /></QatSlot>
          <QatSlot $w={29}><UndoIcon /></QatSlot>
          <QatSlot $w={27}><Caret $off /></QatSlot>
          <QatSlot $w={40}><RedoIcon /></QatSlot>
          <QatSlot $w={39}><PresentIcon /></QatSlot>
          <QatSlot $w={8}><QatMore /></QatSlot>
        </Qat>
        <TitleBar>Software Development Life Cycle [Compatibility Mode] -  Microsoft PowerPoint</TitleBar>
        <WinControls>
          <WinSlot>?</WinSlot>
          <WinSlot><RibbonDisplay /></WinSlot>
          <WinSlot><MinIcon /></WinSlot>
          <WinSlot><RestoreIcon /></WinSlot>
          <WinSlot><CloseIcon /></WinSlot>
        </WinControls>
      </TitleRow>

      <TabRow>
        <FileTab>FILE</FileTab>
        {tabs.map(([label, w, active]) => (
          <Tab key={label} $w={w} $active={active}>{label}</Tab>
        ))}
        <SignIn>
          Sign in
          <Avatar><PersonIcon /></Avatar>
        </SignIn>
      </TabRow>

      <Ribbon>
        <Group $w={222}>
          <GroupBody>
            <Large $w={70}>
              <LargeIcon><PasteIcon /></LargeIcon>
              <LargeLine>Paste</LargeLine>
              <LargeLine><Caret /></LargeLine>
            </Large>
            <SmallCol>
              <SmallRow $off><SmallIcon><CutIcon /></SmallIcon>Cut</SmallRow>
              <SmallRow $off><SmallIcon><CopyIcon /></SmallIcon>Copy<Caret $off $ml={16} /></SmallRow>
              <SmallRow $off><SmallIcon><BrushIcon /></SmallIcon>Format Painter</SmallRow>
            </SmallCol>
          </GroupBody>
          <GroupLabel $shift={24}>Clipboard</GroupLabel>
          <Launcher $right={8}><Launch /></Launcher>
        </Group>

        <Group $w={178}>
          <GroupBody>
            <Large $w={70}>
              <LargeIcon><NewSlideIcon /></LargeIcon>
              <LargeLine>New</LargeLine>
              <LargeLine>Slide<Caret /></LargeLine>
            </Large>
            <SmallCol>
              <SmallRow><SmallIcon><LayoutIcon /></SmallIcon>Layout<Caret $ml={6} /></SmallRow>
              <SmallRow><SmallIcon><ResetIcon /></SmallIcon>Reset</SmallRow>
              <SmallRow $off><SmallIcon><SectionIcon /></SmallIcon>Section<Caret $off $ml={6} /></SmallRow>
            </SmallCol>
          </GroupBody>
          <GroupLabel>Slides</GroupLabel>
        </Group>

        <Group $w={320}>
          <GroupBody $pad={7}>
            <ToolCol $w={312}>
              <ToolRow $mt={11}>
                <FontBox $w={145} $pad={0} $end><Caret $off /></FontBox>
                <FontBox $w={56} $pad={4} $joined>28<Caret $off $ml={17} /></FontBox>
                <Slot $w={34}><FontGrow /></Slot>
                <Slot $w={28}><FontGrow down /></Slot>
                <Slot $w={7} />
                <VSep />
                <Slot $w={40}><EraserIcon /></Slot>
              </ToolRow>
              <ToolRow $mt={13}>
                <Slot $w={28} $weight={700} $size={16}>B</Slot>
                <Slot $w={32} $italic $serif $size={18}>I</Slot>
                <Slot $w={30} $deco="underline" $size={16}>U</Slot>
                <Slot $w={36} $deco="line-through" $weight={700} $size={16}>S</Slot>
                <Slot $w={24} $deco="line-through" $size={13}>abc</Slot>
                <Slot $w={36}><AvGlyph>AV<AvArrow /></AvGlyph></Slot>
                <Slot $w={10}><Caret $off /></Slot>
                <Slot $w={36}>Aa</Slot>
                <Slot $w={6}><Caret $off /></Slot>
                <Slot $w={15} />
                <VSep />
                <Slot $w={40}><ColorA /></Slot>
                <Slot $w={6}><Caret $off /></Slot>
              </ToolRow>
            </ToolCol>
          </GroupBody>
          <GroupLabel $shift={26}>Font</GroupLabel>
          <Launcher $right={7}><Launch /></Launcher>
        </Group>

        <Group $w={443}>
          <GroupBody $pad={5}>
            <ToolCol $w={235}>
              <ToolRow $mt={11}>
                <Slot $w={32}><BulletsIcon /></Slot>
                <Slot $w={14}><Caret $off /></Slot>
                <Slot $w={38}><NumberingIcon /></Slot>
                <Slot $w={8}><Caret $off /></Slot>
                <Slot $w={12} />
                <VSep />
                <Slot $w={4} />
                <Slot $w={32}><IndentIcon dir="out" /></Slot>
                <Slot $w={30}><IndentIcon dir="in" /></Slot>
                <Slot $w={6} />
                <VSep />
                <Slot $w={4} />
                <Slot $w={35}><LineSpacing /></Slot>
                <Slot $w={6}><Caret $off /></Slot>
              </ToolRow>
              <ToolRow $mt={13}>
                <Slot $w={32}><AlignIcon kind="left" /></Slot>
                <Slot $w={32}><AlignIcon kind="center" /></Slot>
                <Slot $w={28}><AlignIcon kind="right" /></Slot>
                <Slot $w={34}><AlignIcon kind="justify" /></Slot>
                <Slot $w={5} />
                <VSep />
                <Slot $w={36}><ColumnsIcon /></Slot>
                <Slot $w={10}><Caret $off /></Slot>
              </ToolRow>
            </ToolCol>
            <SmallCol>
              <SmallRow $off><SmallIcon><TextDir /></SmallIcon>Text Direction<Caret $off $ml={6} /></SmallRow>
              <SmallRow $off><SmallIcon><AlignTextIcon /></SmallIcon>Align Text<Caret $off $ml={6} /></SmallRow>
              <SmallRow $off><SmallIcon><SmartArtIcon /></SmallIcon>Convert to SmartArt<Caret $off $ml={6} /></SmallRow>
            </SmallCol>
          </GroupBody>
          <GroupLabel $shift={26}>Paragraph</GroupLabel>
          <Launcher $right={7}><Launch /></Launcher>
        </Group>

        <Group $w={490}>
          <GroupBody>
            <Gallery>
              <ShapeGrid>{shapes}</ShapeGrid>
              <GalleryScroll>
                <GalleryBtn><Tri up c="#c0c0c0" /></GalleryBtn>
                <GalleryBtn><Tri c="#555" /></GalleryBtn>
                <GalleryBtn $last>
                  <svg width="12" height="10" viewBox="0 0 12 10"><path d="M0 1H12" stroke="#555" strokeWidth="1.6" /><path d="M1 4H11L6 10Z" fill="#555" /></svg>
                </GalleryBtn>
              </GalleryScroll>
            </Gallery>
            <Large $w={52} $ml={11}>
              <LargeIcon><ArrangeIcon /></LargeIcon>
              <LargeLine>Arrange</LargeLine>
              <LargeLine><Caret /></LargeLine>
            </Large>
            <Large $w={48} $ml={13} $off>
              <LargeIcon><QuickStylesIcon /></LargeIcon>
              <LargeLine>Quick</LargeLine>
              <LargeLine>Styles<Caret $off /></LargeLine>
            </Large>
            <SmallCol $ml={11}>
              <SmallRow $off><SmallIcon $gap={5}><ShapeFillIcon /></SmallIcon>Shape Fill<Caret $off $ml={6} /></SmallRow>
              <SmallRow $off><SmallIcon $gap={5}><ShapeOutlineIcon /></SmallIcon>Shape Outline<Caret $off $ml={6} /></SmallRow>
              <SmallRow $off><SmallIcon $gap={5}><ShapeEffectsIcon /></SmallIcon>Shape Effects<Caret $off $ml={6} /></SmallRow>
            </SmallCol>
          </GroupBody>
          <GroupLabel $shift={22}>Drawing</GroupLabel>
          <Launcher $right={7}><Launch /></Launcher>
        </Group>

        <Group $w={130}>
          <GroupBody $pad={11}>
            <SmallCol>
              <SmallRow><SmallIcon $gap={5}><FindIcon /></SmallIcon>Find</SmallRow>
              <SmallRow>
                <SmallIcon $gap={5}>
                  <ReplaceGlyph>
                    <ReplaceTop>ab</ReplaceTop>
                    <ReplaceBottom>ac</ReplaceBottom>
                  </ReplaceGlyph>
                </SmallIcon>
                Replace<Caret $ml={15} />
              </SmallRow>
              <SmallRow><SmallIcon $gap={5}><SelectIcon /></SmallIcon>Select<Caret $ml={6} /></SmallRow>
            </SmallCol>
          </GroupBody>
          <GroupLabel>Editing</GroupLabel>
        </Group>

        <CollapseSlot><CollapseIcon /></CollapseSlot>
      </Ribbon>

      <Workspace>
        <ThumbPane>
          <ThumbList>
            {thumbs.map((t) => (
              <ThumbCard key={t.n} t={t} />
            ))}
          </ThumbList>
          <ScrollCol $w={21} $top={5} $bottom={4}>
            <ScrollBtn><Tri up /></ScrollBtn>
            <ScrollTrack><ScrollThumb $h={174} $top={451} /></ScrollTrack>
            <ScrollBtn><Tri /></ScrollBtn>
          </ScrollCol>
        </ThumbPane>

        <Editor>
          <EditArea>
            <SlideWrap>
              <SlideCard>
                <SlideStripe />
                <SlideText>
                  <SlideLine $ls={-0.67}>reflected in the Sprint Backlog.</SlideLine>
                  <SlideHead $mt={77.5} $ls={1.55}>Sprint Retrospective:</SlideHead>
                  {slideBody[0].map(([line, ls], i) => (
                    <SlideLine key={line} $ls={ls} $indent={i === 0}>{line}</SlideLine>
                  ))}
                  <SlideHead $mt={78.5} $ls={1.4}>Sprint Review:</SlideHead>
                  {slideBody[1].map(([line, ls], i) => (
                    <SlideLine key={line} $ls={ls} $indent={i === 0}>{line}</SlideLine>
                  ))}
                </SlideText>
                <IBeam><CursorIcon /></IBeam>
              </SlideCard>
            </SlideWrap>
            <ScrollCol $w={21} $top={4} $bottom={0}>
              <ScrollBtn><Tri up /></ScrollBtn>
              <ScrollTrack $h={620}><ScrollThumb $h={24} $top={497} /></ScrollTrack>
              <ScrollBtn><Tri /></ScrollBtn>
              <PageArrows>
                <DoubleArrow up />
                <DoubleArrow />
              </PageArrows>
            </ScrollCol>
          </EditArea>
          <NotesBar>Click to add notes</NotesBar>
        </Editor>
      </Workspace>

      <StatusBar>
        <StatusCell $w={134} $text>SLIDE 15 OF 18</StatusCell>
        <StatusCell $w={44}><BookIcon /></StatusCell>
        <StatusCell $w={130} $text>ENGLISH (INDIA)</StatusCell>
        <StatusCell $w={22} $push><NotesIcon /></StatusCell>
        <StatusCell $w={79} $text>NOTES</StatusCell>
        <StatusCell $w={22}><CommentIcon /></StatusCell>
        <StatusCell $w={116} $text>COMMENTS</StatusCell>
        <StatusCell $w={49} $center $active><NormalViewIcon /></StatusCell>
        <StatusCell $w={54} $center><SorterIcon /></StatusCell>
        <StatusCell $w={53} $center><ReadingIcon /></StatusCell>
        <StatusCell $w={54} $center><ShowIcon /></StatusCell>
        <StatusCell $w={24} $center $text $size={20} $weight={700}>-</StatusCell>
        <StatusCell $w={138}>
          <Slider><SliderKnob /></Slider>
        </StatusCell>
        <StatusCell $w={20} $center $text $size={20} $weight={700}>+</StatusCell>
        <StatusCell $w={72} $center $text>100%</StatusCell>
        <StatusCell $w={24} $center><FitIcon /></StatusCell>
      </StatusBar>
      <BlackBar $fill />
    </Page>
  )
}

export default App
